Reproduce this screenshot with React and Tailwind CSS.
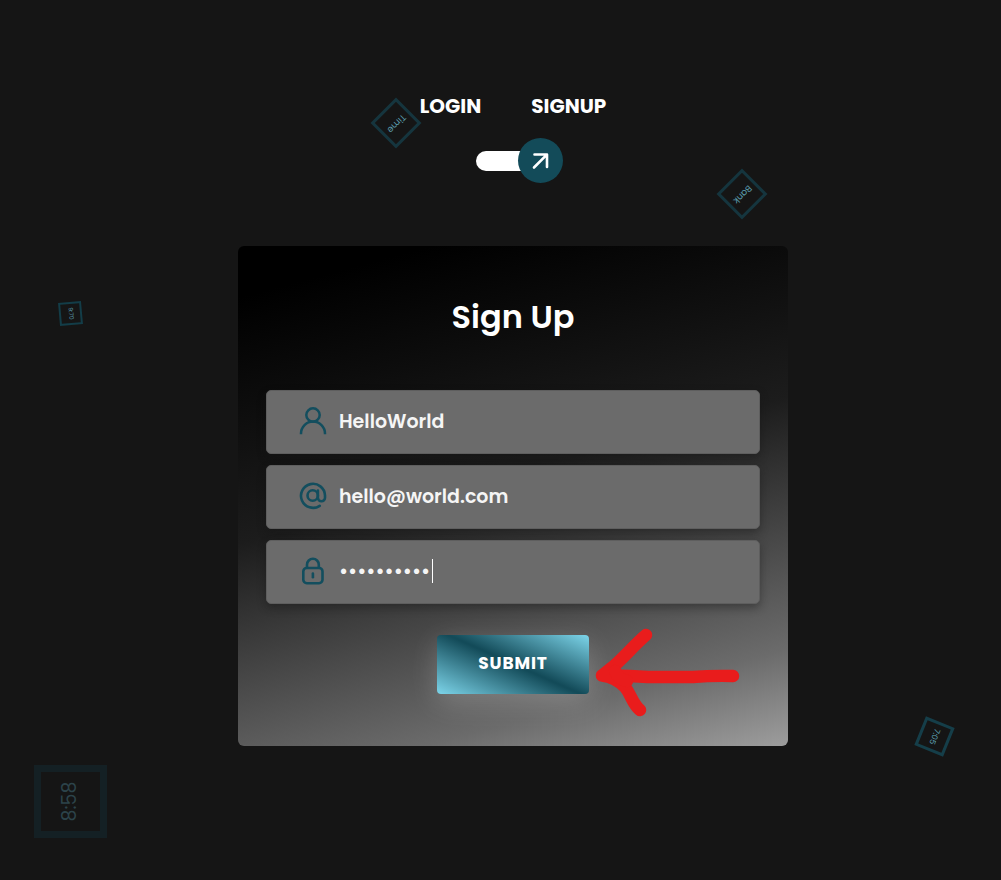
function UserIcon() {
  return (
    <svg viewBox="0 0 28 28" className="size-7 shrink-0" fill="none" stroke="#134e5e" strokeWidth="2.5" strokeLinecap="butt" aria-hidden="true">
      <circle cx="14" cy="8" r="6.7" />
      <path d="M2 27.3V26.500a12 12 0 0 1 24 0v.8" />
    </svg>
  );
}

function AtIcon() {
  return (
    <svg viewBox="0 0 28 28" className="size-7 shrink-0" fill="none" stroke="#134e5e" strokeWidth="2.6" strokeLinecap="round" aria-hidden="true">
      <circle cx="13.700" cy="13.500" r="5.2" />
      <path d="M18.900 8.500v7.200a3.550 3.550 0 0 0 7.100 0V13.500a12 12 0 1 0-5.300 10.300" />
    </svg>
  );
}

function LockIcon() {
  return (
    <svg viewBox="0 0 28 28" className="size-7 shrink-0" fill="none" stroke="#134e5e" strokeWidth="2.6" strokeLinecap="butt" aria-hidden="true">
      <rect x="4.300" y="11" width="19.200" height="15.200" rx="3.400" />
      <path d="M8 11V7.700a5.900 5.900 0 0 1 11.800 0V11" />
      <path d="M13.900 16.600v3.600" strokeLinecap="round" />
    </svg>
  );
}

function Field({ id, label, type, value, icon, caret }) {
  return (
    <div className="flex h-16 items-center gap-3 rounded-[5px] border border-[#5e5e5e] bg-[#6b6b6b] pb-0.5 pl-8 pr-5 shadow-[0_4px_8px_rgba(21,21,21,0.4)]">
      <label htmlFor={id} aria-label={label}>{icon}</label>
      <div className="relative min-w-0 flex-1">
        <input
          id={id}
          type={type}
          defaultValue={value}
          aria-label={label}
          autoComplete="off"
          className="block h-8 w-full bg-transparent text-[19px] font-semibold text-[#f5f5f5] outline-none"
        />
        {caret && <span className="absolute left-[93px] top-1 h-6 w-px bg-white" />}
      </div>
    </div>
  );
}

export default function App() {
  return (
    <main className="relative min-h-screen overflow-hidden bg-[#151515] pl-[25px] font-['Poppins','Inter',sans-serif] text-white">
      <div className="pointer-events-none absolute inset-0 text-[#5c9fb0]">
        <span className="absolute left-[378px] top-[105px] flex size-9 rotate-135 items-center justify-center border-3 border-[#15353e] text-[9px]">Time</span>
        <span className="absolute left-[724px] top-[176px] flex size-9 rotate-135 items-center justify-center border-3 border-[#15353e] text-[9px]">Bank</span>
        <span className="absolute left-[59px] top-[302px] flex size-[23px] rotate-85 items-center justify-center border-2 border-[#133d48] text-[6px]">9:70</span>
        <span className="absolute left-[919px] top-[721px] flex size-[31px] rotate-112 items-center justify-center border-3 border-[#153e49] text-[8px]">7:05</span>
        <span className="absolute left-[34px] top-[765px] flex size-[73px] -rotate-90 items-center justify-center border-[7px] border-[#142024] text-[19px] text-[#2c434a]">8:58</span>
      </div>

      <div className="flex flex-col items-center pt-[91px]">
        <nav className="flex gap-[50px] text-[20px] leading-[30px] font-bold">
          <a href="#login">LOGIN</a>
          <a href="#signup">SIGNUP</a>
        </nav>

        <button type="button" aria-label="Switch form" className="mt-[17px] ml-3 flex h-[45px] w-[87px] items-center">
          <span className="h-5 flex-1 rounded-l-full bg-white" />
          <span className="-ml-3 flex size-[45px] items-center justify-center rounded-full bg-[#134b59]">
            <svg viewBox="0 0 18 18" className="size-[18px]" fill="none" stroke="#fff" strokeWidth="2.6" strokeLinecap="round" strokeLinejoin="round" aria-hidden="true">
              <path d="M3.500 2.500h12.500v12.500M15.600 2.900 3 15.500" />
            </svg>
          </span>
        </button>

        <section className="mt-[63px] mb-8 w-full max-w-[550px] rounded-md bg-linear-[165deg,#000_8%,#1c1c1c_46%,#6b6b6b_85%,#9d9d9d_100%] px-[28px] pt-[46px] pb-[52px]">
          <form onSubmit={(e) => e.preventDefault()}>
            <h1 className="text-center text-[32px] leading-[50px] font-semibold">Sign Up</h1>
            <div className="mt-[48px] flex flex-col gap-[11px]">
              <Field id="name" label="Full name" type="text" value="HelloWorld" icon={<UserIcon />} />
              <Field id="email" label="Email" type="email" value="hello@world.com" icon={<AtIcon />} />
              <Field id="password" label="Password" type="password" value="helloworld" icon={<LockIcon />} caret />
            </div>
            <div className="relative mx-auto mt-[31px] w-[152px]">
              <button type="submit" className="block h-[59px] w-full rounded-[4px] bg-linear-[24deg,#7dd5ea_0%,#134b59_50%,#134b59_51%,#7dd5ea_100%] pb-0.5 text-[17px] font-bold tracking-wider shadow-[0_8px_28px_rgba(255,255,255,0.2)]">
                SUBMIT
              </button>
              <svg viewBox="0 0 146 90" className="pointer-events-none absolute -top-2 left-[158px] h-[90px] w-[146px]" fill="none" stroke="#e91c1c" strokeWidth="12.500" strokeLinecap="round" strokeLinejoin="round" aria-hidden="true">
                <path d="M51 8C39 18 24 36 15 42L7 48.500Q30 48 53 50L98 50Q116 48.500 138 49M7 48.500Q20 50 30 60C37 69 37 76 45 83" />
                <path d="M20 44Q24 53 32 54" />
              </svg>
            </div>
          </form>
        </section>
      </div>
    </main>
  );
}
